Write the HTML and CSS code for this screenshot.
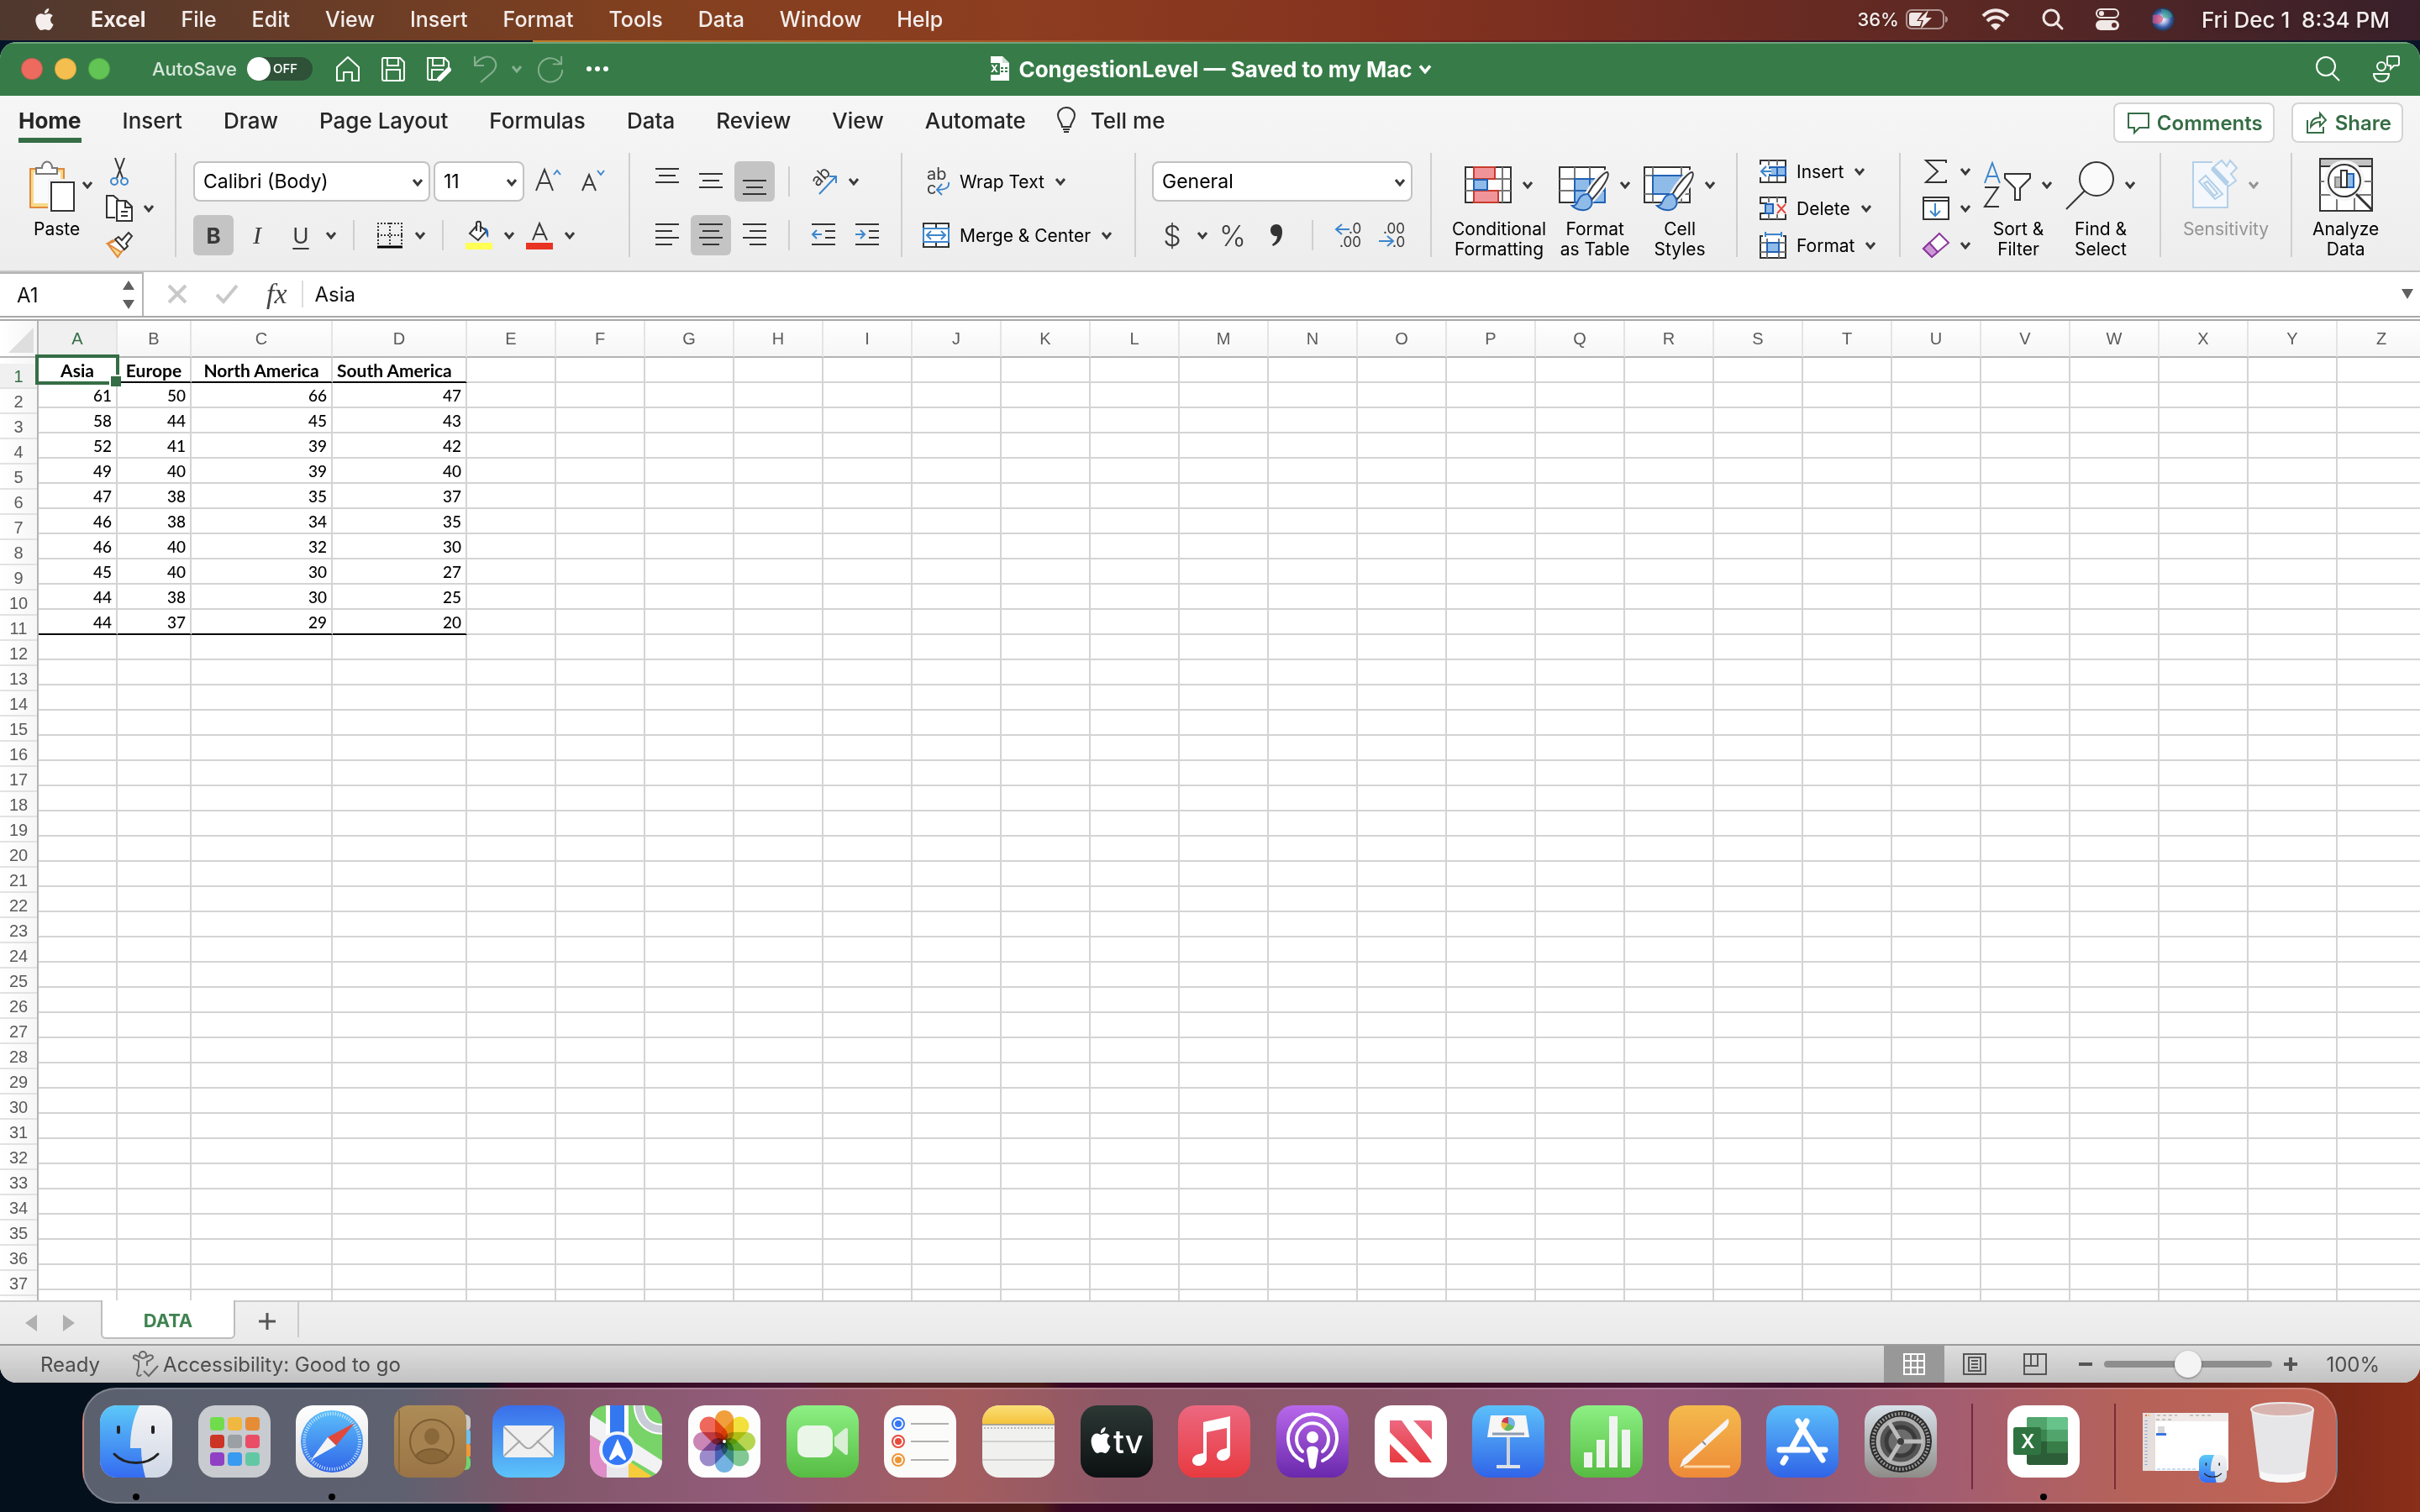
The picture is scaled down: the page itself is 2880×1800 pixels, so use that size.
FILE: index.html
```html
<!DOCTYPE html>
<html lang="en">
<head>
    <meta charset="UTF-8">
    <meta name="viewport" content="width=device-width, initial-scale=1.0">
    <title>CongestionLevel</title>
    <link rel="stylesheet" href="styles.css">
</head>
<body>
    <!-- shared shapes -->
    <svg class="defs" width="0" height="0" aria-hidden="true">
        <defs>
            <symbol id="chev" viewBox="0 0 14 10"><path d="M2 2l5 6 5-6" fill="none" stroke="currentColor" stroke-width="3"/></symbol>
            <symbol id="apple" viewBox="0 0 24 24"><path d="M12.152 6.896c-.948 0-2.415-1.078-3.96-1.04-2.04.027-3.91 1.183-4.961 3.014-2.117 3.675-.546 9.103 1.519 12.09 1.013 1.454 2.208 3.09 3.792 3.039 1.52-.065 2.09-.987 3.935-.987 1.831 0 2.35.987 3.96.948 1.637-.026 2.676-1.48 3.676-2.948 1.156-1.688 1.636-3.325 1.662-3.415-.039-.013-3.182-1.221-3.22-4.857-.026-3.04 2.48-4.494 2.597-4.559-1.429-2.09-3.623-2.324-4.39-2.376-2-.156-3.675 1.09-4.61 1.09zM15.53 3.83c.843-1.012 1.4-2.427 1.245-3.83-1.207.052-2.662.805-3.532 1.818-.78.896-1.454 2.338-1.273 3.714 1.338.104 2.715-.688 3.559-1.701" fill="currentColor"/></symbol>
            <symbol id="brush" viewBox="0 0 60 64">
                <path d="M58 17c-3-1-16 12-24 27l6 5C50 38 62 22 58 17z" fill="#fff" stroke="#f2f2f2" stroke-width="7"/>
                <path d="M58 17c-3-1-16 12-24 27l6 5C50 38 62 22 58 17z" fill="#fff" stroke="#3a3a3a" stroke-width="2"/>
                <path d="M35 43c-8-1-11 5-13 10-1 3-4 4-6 4 5 5 17 8 22 1 3-4 2-9-3-15z" fill="#8fbbe8" stroke="#2262b4" stroke-width="2"/>
            </symbol>
            <symbol id="finder" viewBox="0 0 86 86">
                <rect width="86" height="86" rx="20" fill="url(#gFinderR)"/>
                <path d="M47 0H20A20 20 0 0 0 0 20v46a20 20 0 0 0 20 20h34c-3-11-5-23-5-35H36C36 33 39 16 47 0z" fill="url(#gFinderL)"/>
                <path d="M22 26v6M63 26v6" stroke="#222" stroke-width="4" stroke-linecap="round"/>
                <path d="M17 58c13 14 39 14 52 0" fill="none" stroke="#222" stroke-width="3" stroke-linecap="round"/>
            </symbol>
            <linearGradient id="gFinderL" x2="0" y2="1"><stop offset="0" stop-color="#5cc8f8"/><stop offset="1" stop-color="#356bf0"/></linearGradient>
            <linearGradient id="gFinderR" x2="0" y2="1"><stop offset="0" stop-color="#f4f4f6"/><stop offset="1" stop-color="#d0d8e6"/></linearGradient>
            <linearGradient id="gBlue" x2="0" y2="1"><stop offset="0" stop-color="#5cc0fa"/><stop offset="1" stop-color="#3064e8"/></linearGradient>
            <linearGradient id="gMail" x2="0" y2="1"><stop offset="0" stop-color="#3a6eea"/><stop offset="1" stop-color="#5cc4fa"/></linearGradient>
            <linearGradient id="gGreen" x2="0" y2="1"><stop offset="0" stop-color="#8cf084"/><stop offset="1" stop-color="#56bc42"/></linearGradient>
            <linearGradient id="gWhite" x2="0" y2="1"><stop offset="0" stop-color="#fff"/><stop offset="1" stop-color="#dcdcdc"/></linearGradient>
            <linearGradient id="gTan" x2="0" y2="1"><stop offset="0" stop-color="#ae8c56"/><stop offset="1" stop-color="#9a7446"/></linearGradient>
            <linearGradient id="gYellow" x2="0" y2="1"><stop offset="0" stop-color="#fae078"/><stop offset="1" stop-color="#f5c23c"/></linearGradient>
            <linearGradient id="gDark" x2="0" y2="1"><stop offset="0" stop-color="#2c3834"/><stop offset="1" stop-color="#0c1012"/></linearGradient>
            <linearGradient id="gRed" x2="0" y2="1"><stop offset="0" stop-color="#ec6880"/><stop offset="1" stop-color="#e83a40"/></linearGradient>
            <linearGradient id="gPurple" x2="0" y2="1"><stop offset="0" stop-color="#b868ea"/><stop offset="1" stop-color="#6a28ac"/></linearGradient>
            <linearGradient id="gOrange" x2="0" y2="1"><stop offset="0" stop-color="#f4ba4c"/><stop offset="1" stop-color="#ee8a38"/></linearGradient>
            <linearGradient id="gGear" x2="0" y2="1"><stop offset="0" stop-color="#d8e2ea"/><stop offset="1" stop-color="#8e8c88"/></linearGradient>
            <radialGradient id="gSiri"><stop offset="0" stop-color="#fff"/><stop offset=".35" stop-color="#a8b8e0"/><stop offset=".7" stop-color="#3a5aa8"/><stop offset="1" stop-color="#24344a"/></radialGradient>
            <clipPath id="tile"><rect width="86" height="86" rx="20"/></clipPath>
        </defs>
    </svg>

    <header class="menubar">
        <nav class="menus">
            <button class="apple" aria-label="Apple"><svg width="26" height="30"><use href="#apple"/></svg></button>
            <button class="app-name">Excel</button>
            <button>File</button>
            <button>Edit</button>
            <button>View</button>
            <button>Insert</button>
            <button>Format</button>
            <button>Tools</button>
            <button>Data</button>
            <button>Window</button>
            <button>Help</button>
        </nav>
        <div class="tray">
            <span class="battery">36%
                <svg width="52" height="24" viewBox="0 0 52 24"><rect x="1" y="1" width="44" height="22" rx="6" fill="none" stroke="#fff" stroke-opacity=".5" stroke-width="2"/><path d="M47 8c4 1 4 7 0 8z" fill="#fff" opacity=".5"/><path d="M7 4h13l-7 10h6l-2 6H7a3 3 0 0 1-3-3V7a3 3 0 0 1 3-3z" fill="#f0e8e6"/><path d="M27 1L15 13h6l-3 10 13-13h-7z" fill="#f0e8e6"/></svg>
            </span>
            <svg width="34" height="26" viewBox="0 0 34 26" fill="none" stroke="#f0e8e6" stroke-width="4"><path d="M2 9c9-9 21-9 30 0M7 15c6-6 14-6 20 0"/><path d="M11 20c4-3 8-3 12 0l-6 6z" fill="#f0e8e6" stroke="none"/></svg>
            <svg width="26" height="26" viewBox="0 0 26 26" fill="none" stroke="#f0e8e6" stroke-width="3"><circle cx="11" cy="11" r="9"/><path d="M17 17l7 7" stroke-linecap="round"/></svg>
            <svg width="28" height="28" viewBox="0 0 28 28"><rect x="1" y="2" width="26" height="10" rx="5" fill="none" stroke="#f0e8e6" stroke-width="2"/><circle cx="7" cy="7" r="3" fill="#f0e8e6"/><rect y="15" width="28" height="12" rx="6" fill="#f0e8e6"/><circle cx="22" cy="21" r="3" fill="#5a2a28"/></svg>
            <svg width="28" height="28" viewBox="0 0 28 28"><circle cx="14" cy="14" r="14" fill="url(#gSiri)"/><path d="M2 9c8-2 14 2 12 6s-8 6-12 3z" fill="#e0507c" opacity=".7"/><path d="M12 2c8 0 13 4 13 9-4 2-9 2-11 1z" fill="#3cae90" opacity=".6"/></svg>
            <time>Fri Dec 1&nbsp; 8:34 PM</time>
        </div>
    </header>

    <main class="window">
        <div class="titlebar">
            <div class="title-left">
                <div class="lights">
                    <button class="light close" aria-label="Close"></button>
                    <button class="light minimize" aria-label="Minimize"></button>
                    <button class="light maximize" aria-label="Zoom"></button>
                </div>
                <label class="autosave">AutoSave
                    <span class="switch"><input type="checkbox" role="switch"><span>OFF</span></span>
                </label>
                <div class="quick">
                    <button aria-label="Home"><svg width="28" height="32" viewBox="0 0 28 32" fill="none" stroke="#fff" stroke-width="2"><path d="M1 14L14 2l13 12v16h-8V20H9v10H1z" stroke-linejoin="round"/></svg></button>
                    <button aria-label="Save"><svg width="28" height="30" viewBox="0 0 28 30" fill="none" stroke="#fff" stroke-width="2"><path d="M2 2h20l5 5v20a2 2 0 0 1-2 2H3a2 2 0 0 1-2-2V3zM7 2v9h13V2M6 29V16h16v13"/></svg></button>
                    <button aria-label="Save as"><svg width="30" height="30" viewBox="0 0 30 30" fill="none" stroke="#fff" stroke-width="2"><path d="M12 28H3a2 2 0 0 1-2-2V2h20l5 5v6M7 2v9h13V2M6 28V16h14"/><path d="M15 27l11-11" stroke-width="6" stroke-linecap="round"/></svg></button>
                    <button class="dim" aria-label="Undo"><svg width="28" height="34" viewBox="0 0 28 34" fill="none" stroke="#fff" stroke-width="2"><path d="M1 2v11h11M1 12C8 3 17 0 23 5c5 5 4 11-1 16L8 33"/></svg></button>
                    <button class="dim small" aria-label="Undo list"><svg width="14" height="10"><use href="#chev"/></svg></button>
                    <button class="dim" aria-label="Redo"><svg width="32" height="34" viewBox="0 0 34 34" fill="none" stroke="#fff" stroke-width="2"><path d="M31 1v10H20M30 11A15 15 0 1 0 32 18"/></svg></button>
                    <button aria-label="More"><svg width="28" height="6" viewBox="0 0 28 6" fill="#fff"><circle cx="4" cy="3" r="3"/><circle cx="14" cy="3" r="3"/><circle cx="24" cy="3" r="3"/></svg></button>
                </div>
            </div>
            <h1 class="doc-title">
                <svg width="26" height="30" viewBox="0 0 26 30"><path d="M3 0h14l8 8v21H3z" fill="#fff"/><path d="M17 0v8h8z" fill="#cfe0d4"/><path d="M15 13h3v2h-3zM20 13h3v2h-3zM15 17h3v2h-3zM20 17h3v2h-3z" fill="#377c48"/><rect y="8" width="14" height="14" rx="1" fill="#377c48"/><text x="3" y="19" font-size="12" fill="#fff">X</text></svg>
                CongestionLevel — Saved to my Mac
                <svg class="title-chev" width="18" height="12"><use href="#chev"/></svg>
            </h1>
            <div class="title-right">
                <button aria-label="Search"><svg width="30" height="30" viewBox="0 0 30 30" fill="none" stroke="#fff" stroke-width="2"><circle cx="12" cy="12" r="11"/><path d="M19 20l9 9"/></svg></button>
                <button aria-label="Collaborate"><svg width="32" height="32" viewBox="0 0 32 32" fill="none" stroke="#fff" stroke-width="2"><circle cx="10" cy="13" r="5"/><path d="M1 22h18c0 12-18 12-18 0zM19 1h10a2 2 0 0 1 2 2v7a2 2 0 0 1-2 2h-4l-4 4v-4h-2a2 2 0 0 1-2-2V3a2 2 0 0 1 2-2z"/></svg></button>
            </div>
        </div>

        <section class="ribbon">
            <div class="tabs">
                <button class="tab active">Home</button>
                <button class="tab">Insert</button>
                <button class="tab">Draw</button>
                <button class="tab">Page Layout</button>
                <button class="tab">Formulas</button>
                <button class="tab">Data</button>
                <button class="tab">Review</button>
                <button class="tab">View</button>
                <button class="tab">Automate</button>
                <button class="tab tell"><svg width="22" height="32" viewBox="0 0 22 32" fill="none" stroke="#333" stroke-width="2"><path d="M6 24c0-6-5-7-5-14a10 9 0 0 1 20 0c0 7-5 8-5 14zM6 24h10M7 27h8M8 30h6"/></svg>Tell me</button>
                <div class="tab-actions">
                    <button class="pill"><svg width="26" height="26" viewBox="0 0 26 26" fill="none" stroke="#356d45" stroke-width="2"><path d="M1 2h24v17H14l-6 6v-6H1z"/></svg>Comments</button>
                    <button class="pill"><svg width="26" height="26" viewBox="0 0 26 26" fill="none" stroke="#356d45" stroke-width="2"><path d="M2 10v15h19v-7M6 18c0-7 4-11 11-11V2l7 8-7 7v-5c-5 0-8 2-11 6z"/></svg>Share</button>
                </div>
            </div>

            <div class="groups">
                <div class="group group-clipboard">
                    <button class="big">
                        <span class="big-icon"><svg width="56" height="64" viewBox="0 0 56 64"><rect x="2" y="13" width="40" height="46" fill="#f6d98a" stroke="#e08a3c" stroke-width="2"/><rect x="6" y="17" width="32" height="37" fill="#fafafa"/><path d="M9 12h7c0-10 12-10 12 0h6v7H9z" fill="#fff" stroke="#777" stroke-width="2"/><rect x="23" y="25" width="33" height="39" fill="#f2f2f2"/><rect x="27" y="29" width="27" height="34" fill="#fff" stroke="#333" stroke-width="2"/></svg><svg class="chev" width="14" height="10"><use href="#chev"/></svg></span>
                        <span>Paste</span>
                    </button>
                    <div class="stack">
                        <button class="mini" aria-label="Cut"><svg width="32" height="32" viewBox="0 0 32 32" fill="none" stroke="#333" stroke-width="2"><path d="M11 0l9 24M22 0l-9 24"/><circle cx="10" cy="28" r="4" stroke="#3c86cc"/><circle cx="22" cy="28" r="4" stroke="#3c86cc"/></svg></button>
                        <button class="mini" aria-label="Copy"><svg width="32" height="32" viewBox="0 0 32 32" fill="#fff" stroke="#333" stroke-width="2"><path d="M11 27H1V1h8l6 5"/><path d="M13 7h11l7 7v17H13zM23 7v8h8M18 20h8M18 25h8"/></svg><svg class="chev" width="14" height="10"><use href="#chev"/></svg></button>
                        <button class="mini" aria-label="Format painter"><svg width="32" height="32" viewBox="0 0 32 32"><path d="M8 10L2 14l12 16 5-7z" fill="#f6d98a" stroke="#e08a3c" stroke-width="2"/><path d="M2 14c6-1 8-2 10-5l11 11-5 4z" fill="#fff" stroke="#e08a3c" stroke-width="2"/><path d="M11 9l4-3 4 4L27 1l4 4-7 9 2 3-4 4z" fill="#fff" stroke="#333" stroke-width="2"/></svg></button>
                    </div>
                </div>

                <div class="group rows group-font">
                    <div class="row">
                        <span class="pick pick-font"><select aria-label="Font"><option>Calibri (Body)</option></select><svg class="chev" width="14" height="10"><use href="#chev"/></svg></span>
                        <span class="pick pick-size"><select aria-label="Font size"><option>11</option></select><svg class="chev" width="14" height="10"><use href="#chev"/></svg></span>
                        <button class="tool" aria-label="Increase font size"><svg width="32" height="32" viewBox="0 0 32 32" fill="none" stroke-width="2"><path d="M2 27L12 2l10 25M6 18h12" stroke="#3a3a3a"/><path d="M23 8l4-5 4 5" stroke="#3c86cc"/></svg></button>
                        <button class="tool" aria-label="Decrease font size"><svg width="32" height="32" viewBox="0 0 32 32" fill="none" stroke-width="2"><path d="M5 27L13 8l8 19M8 20h10" stroke="#3a3a3a"/><path d="M23 3l4 5 4-5" stroke="#3c86cc"/></svg></button>
                    </div>
                    <div class="row">
                        <button class="tool on bold">B</button>
                        <button class="tool italic">I</button>
                        <button class="tool underline">U</button>
                        <button class="drop" aria-label="Underline styles"><svg class="chev" width="14" height="10"><use href="#chev"/></svg></button>
                        <i class="divider"></i>
                        <button class="tool" aria-label="Borders"><svg width="32" height="32" viewBox="0 0 32 32" stroke="#333" stroke-width="2"><path d="M1 2h30M1 16h30M2 1v26M16 1v26M30 1v26" stroke-dasharray="2 2"/><path d="M1 30h30" stroke="#000" stroke-width="3"/></svg></button>
                        <button class="drop" aria-label="Border styles"><svg class="chev" width="14" height="10"><use href="#chev"/></svg></button>
                        <i class="divider"></i>
                        <button class="tool" aria-label="Fill color"><svg width="32" height="34" viewBox="0 0 32 34"><path d="M14 5L5 15l10 8 10-11-8-6M13 12V3c0-3 5-3 5 0v10" fill="#fff" stroke="#333" stroke-width="2"/><path d="M22 8c5 0 6 5 5 12-3-2-2-7-5-12z" fill="#2468b8"/><rect y="26" width="32" height="8" fill="#ffff54"/></svg></button>
                        <button class="drop" aria-label="Fill colors"><svg class="chev" width="14" height="10"><use href="#chev"/></svg></button>
                        <button class="tool" aria-label="Font color"><svg width="32" height="34" viewBox="0 0 32 34"><path d="M8 23L16 3l9 20M11 16h11" fill="none" stroke="#3a3a3a" stroke-width="2"/><rect y="26" width="32" height="8" fill="#e93323"/></svg></button>
                        <button class="drop" aria-label="Font colors"><svg class="chev" width="14" height="10"><use href="#chev"/></svg></button>
                    </div>
                </div>

                <div class="group rows group-align">
                    <div class="row">
                        <button class="tool" aria-label="Align top"><svg width="30" height="32" viewBox="0 0 30 32" stroke="#333" stroke-width="2"><path d="M1 1h28M5 9h20M1 17h28"/></svg></button>
                        <button class="tool" aria-label="Align middle"><svg width="30" height="32" viewBox="0 0 30 32" stroke="#333" stroke-width="2"><path d="M1 7h28M5 15h20M1 23h28"/></svg></button>
                        <button class="tool on" aria-label="Align bottom"><svg width="30" height="32" viewBox="0 0 30 32" stroke="#333" stroke-width="2"><path d="M1 15h28M5 23h20M1 31h28"/></svg></button>
                        <i class="divider"></i>
                        <button class="tool" aria-label="Orientation"><svg width="34" height="32" viewBox="0 0 34 32"><text x="0" y="0" font-size="20" fill="#3a3a3a" transform="translate(10 23) rotate(-45)">ab</text><path d="M12 31L32 10M24 10h8v8" fill="none" stroke="#3c86cc" stroke-width="2"/></svg></button>
                        <button class="drop" aria-label="Orientations"><svg class="chev" width="14" height="10"><use href="#chev"/></svg></button>
                    </div>
                    <div class="row">
                        <button class="tool" aria-label="Align left"><svg width="30" height="30" viewBox="0 0 30 30" stroke="#333" stroke-width="2"><path d="M1 2h28M1 10h20M1 18h28M1 26h20"/></svg></button>
                        <button class="tool on" aria-label="Center"><svg width="30" height="30" viewBox="0 0 30 30" stroke="#333" stroke-width="2"><path d="M1 2h28M5 10h20M1 18h28M5 26h20"/></svg></button>
                        <button class="tool" aria-label="Align right"><svg width="30" height="30" viewBox="0 0 30 30" stroke="#333" stroke-width="2"><path d="M1 2h28M9 10h20M1 18h28M9 26h20"/></svg></button>
                        <i class="divider"></i>
                        <button class="tool" aria-label="Decrease indent"><svg width="30" height="30" viewBox="0 0 30 30" fill="none" stroke="#333" stroke-width="2"><path d="M1 2h28M17 10h12M17 18h12M1 26h28"/><path d="M13 14H2M7 9l-5 5 5 5" stroke="#3c86cc"/></svg></button>
                        <button class="tool" aria-label="Increase indent"><svg width="30" height="30" viewBox="0 0 30 30" fill="none" stroke="#333" stroke-width="2"><path d="M1 2h28M17 10h12M17 18h12M1 26h28"/><path d="M1 14h11M7 9l5 5-5 5" stroke="#3c86cc"/></svg></button>
                    </div>
                </div>

                <div class="group rows group-wrap">
                    <div class="row">
                        <button class="wide"><svg width="32" height="32" viewBox="0 0 32 32"><text x="5" y="14" font-size="20" fill="#3a3a3a">ab</text><text x="5" y="31" font-size="20" fill="#3a3a3a">c</text><path d="M31 17c1 6-3 9-14 9M23 19l-6 7 6 6" fill="none" stroke="#3c86cc" stroke-width="2"/></svg>Wrap Text<svg class="chev" width="14" height="10"><use href="#chev"/></svg></button>
                    </div>
                    <div class="row">
                        <button class="wide"><svg width="32" height="32" viewBox="0 0 32 32" fill="#fff" stroke="#333" stroke-width="2"><rect x="1" y="2" width="30" height="28"/><path d="M16 2v6M16 24v6"/><rect x="1" y="8" width="30" height="16" stroke="#3c86cc"/><path d="M5 16h22M10 11l-5 5 5 5M22 11l5 5-5 5" fill="none" stroke="#3c86cc"/></svg>Merge &amp; Center<svg class="chev" width="14" height="10"><use href="#chev"/></svg></button>
                    </div>
                </div>

                <div class="group rows group-number">
                    <div class="row">
                        <span class="pick pick-format"><select aria-label="Number format"><option>General</option></select><svg class="chev" width="14" height="10"><use href="#chev"/></svg></span>
                    </div>
                    <div class="row">
                        <button class="tool symbol">$</button>
                        <button class="drop" aria-label="Currencies"><svg class="chev" width="14" height="10"><use href="#chev"/></svg></button>
                        <button class="tool symbol">%</button>
                        <button class="tool" aria-label="Comma style"><svg width="16" height="28" viewBox="0 0 16 28"><path d="M8 1c4 0 7 3 7 9 0 8-4 14-11 17l-1-2c4-3 6-6 6-10C4 16 1 12 1 8c0-4 3-7 7-7z" fill="#333"/></svg></button>
                        <i class="divider"></i>
                        <button class="tool" aria-label="Increase decimal"><svg width="32" height="32" viewBox="0 0 32 32"><g font-size="17" fill="#3a3a3a"><text x="16" y="14">.0</text><text x="5" y="30">.00</text></g><path d="M17 9H1M8 3L1 9l7 6" fill="none" stroke="#3c86cc" stroke-width="2"/></svg></button>
                        <button class="tool" aria-label="Decrease decimal"><svg width="32" height="32" viewBox="0 0 32 32"><g font-size="17" fill="#3a3a3a"><text x="5" y="14">.00</text><text x="16" y="30">.0</text></g><path d="M0 23h17M10 17l7 6-7 6" fill="none" stroke="#3c86cc" stroke-width="2"/></svg></button>
                    </div>
                </div>

                <div class="group group-styles">
                    <button class="big">
                        <span class="big-icon"><svg width="56" height="64" viewBox="0 0 56 64" stroke-width="2"><rect x="1" y="11" width="54" height="42" fill="#fff" stroke="#333"/><path d="M1 25h54M1 39h54M11 11v42M45 11v42" stroke="#777"/><path d="M11 11h25v14H11zM11 39h29v14H11z" fill="#f1949a" stroke="#c93a2c"/><path d="M11 26h16v12H11z" fill="#8fbbe8" stroke="#2262b4"/></svg><svg class="chev" width="14" height="10"><use href="#chev"/></svg></span>
                        <span>Conditional<br>Formatting</span>
                    </button>
                    <button class="big">
                        <span class="big-icon"><svg width="60" height="64" viewBox="0 0 60 64" stroke-width="2"><rect x="1" y="11" width="54" height="42" fill="#fff" stroke="#333"/><path d="M1 25h54M1 39h18M19 11v14M37 11v14" stroke="#777"/><path d="M19 25h36v28H19zM19 39h36M37 25v28" fill="#8fbbe8" stroke="#2262b4"/><use href="#brush" width="60" height="64"/></svg><svg class="chev" width="14" height="10"><use href="#chev"/></svg></span>
                        <span>Format<br>as Table</span>
                    </button>
                    <button class="big">
                        <span class="big-icon"><svg width="60" height="64" viewBox="0 0 60 64" stroke-width="2"><rect x="1" y="11" width="54" height="42" fill="#fff" stroke="#333"/><path d="M1 21h54M1 43h54M11 11v42M45 11v42" stroke="#777"/><path d="M11 21h34v22H11z" fill="#8fbbe8" stroke="#2262b4"/><use href="#brush" width="60" height="64"/></svg><svg class="chev" width="14" height="10"><use href="#chev"/></svg></span>
                        <span>Cell<br>Styles</span>
                    </button>
                </div>

                <div class="group group-cells">
                    <div class="stack">
                        <button class="mini"><svg width="32" height="32" viewBox="0 0 32 32" fill="#fff" stroke="#333" stroke-width="2"><path d="M1 8V3h30v26H1v-6"/><path d="M11 3v6M21 3v6M11 22v6M21 22v6" stroke="#777"/><path d="M12 11h19v10H12zM21 11v10" fill="#8fbbe8" stroke="#2262b4"/><path d="M14 16H2M8 10l-6 6 6 6" fill="none" stroke="#f6f6f6" stroke-width="6"/><path d="M14 16H2M8 10l-6 6 6 6" fill="none" stroke="#3c86cc"/></svg>Insert<svg class="chev" width="14" height="10"><use href="#chev"/></svg></button>
                        <button class="mini"><svg width="32" height="32" viewBox="0 0 32 32" fill="#fff" stroke="#333" stroke-width="2"><path d="M31 10V3H1v7h8M9 22H1v7h30v-6"/><path d="M11 3v6M21 3v6M11 23v6M21 23v6" stroke="#777"/><path d="M7 11h9v11H7z" fill="#8fbbe8" stroke="#2262b4"/><path d="M21 11l10 11M31 11L21 22" stroke="#f6f6f6" stroke-width="6"/><path d="M21 11l10 11M31 11L21 22" stroke="#e24c40"/></svg>Delete<svg class="chev" width="14" height="10"><use href="#chev"/></svg></button>
                        <button class="mini"><svg width="32" height="32" viewBox="0 0 32 32" fill="#fff" stroke="#333" stroke-width="2"><path d="M4 5H1v26h30V5h-3"/><path d="M1 13h30M1 24h30M9 8v23M23 8v23" stroke="#777"/><path d="M9 13h14v11H9z" fill="#8fbbe8" stroke="#2262b4"/><path d="M7 0v6M26 0v6M7 3h19" stroke="#3c86cc"/></svg>Format<svg class="chev" width="14" height="10"><use href="#chev"/></svg></button>
                    </div>
                </div>

                <div class="group group-editing">
                    <div class="stack">
                        <button class="mini" aria-label="AutoSum"><svg width="32" height="32" viewBox="0 0 32 32" fill="none" stroke="#333" stroke-width="2"><path d="M28 6V3H4l14 13L4 29h24v-3"/></svg><svg class="chev" width="14" height="10"><use href="#chev"/></svg></button>
                        <button class="mini" aria-label="Fill"><svg width="32" height="32" viewBox="0 0 32 32" fill="#fff" stroke="#333" stroke-width="2"><path d="M1 3h30v26H1zM1 7h30"/><path d="M15 10v15M9 19l6 6 6-6" fill="none" stroke="#3c86cc"/></svg><svg class="chev" width="14" height="10"><use href="#chev"/></svg></button>
                        <button class="mini" aria-label="Clear"><svg width="32" height="32" viewBox="0 0 32 32" stroke="#8a389c" stroke-width="2"><path d="M20 2l11 11-20 17L1 20z" fill="#fff"/><path d="M8 13l10 11-7 6L1 20z" fill="#cc96d4"/></svg><svg class="chev" width="14" height="10"><use href="#chev"/></svg></button>
                    </div>
                    <button class="big">
                        <span class="big-icon"><svg width="56" height="64" viewBox="0 0 56 64" fill="none" stroke-width="2"><path d="M1 30l9-24 9 24M4 22h12" stroke="#3c86cc"/><path d="M1 35h16L1 58h17" stroke="#333"/><path d="M25 19h30v5L43 36v14h-6V36L25 24z" fill="#fff" stroke="#333"/></svg><svg class="chev" width="14" height="10"><use href="#chev"/></svg></span>
                        <span>Sort &amp;<br>Filter</span>
                    </button>
                    <button class="big">
                        <span class="big-icon"><svg width="58" height="64" viewBox="0 0 58 64" fill="#fafafa" stroke="#333" stroke-width="2"><path d="M1 61l22-22"/><circle cx="37" cy="25" r="20"/></svg><svg class="chev" width="14" height="10"><use href="#chev"/></svg></span>
                        <span>Find &amp;<br>Select</span>
                    </button>
                </div>

                <div class="group group-sensitivity">
                    <button class="big" disabled>
                        <span class="big-icon"><svg width="54" height="64" viewBox="0 0 54 64" fill="#f4f8fc" stroke="#b3cfe8" stroke-width="2"><path d="M24 5H1v54h41V34"/><path d="M16 21l20 22-9 6L8 28z"/><path d="M18 28l12 14-4 3-12-15z"/><path d="M24 12l11-9 6 7 4-7 8 9-7 7 6 8-9 7z"/><path d="M24 12l18 19" stroke-width="6"/></svg><svg class="chev" width="14" height="10"><use href="#chev"/></svg></span>
                        <span>Sensitivity</span>
                    </button>
                </div>

                <div class="group group-analyze">
                    <button class="big">
                        <span class="big-icon"><svg width="64" height="64" viewBox="0 0 64 64" fill="#fff" stroke="#333" stroke-width="2"><rect x="1" y="1" width="62" height="62"/><path d="M1 1h62v9H1z" fill="#c4c4c4"/><path d="M1 28h62M1 44h62M21 44v18M42 44v18" stroke="#777"/><circle cx="30" cy="27" r="23" fill="#f4f4f4" stroke="#f4f4f4"/><circle cx="30" cy="27" r="19"/><path d="M44 43l19 19" stroke-width="3"/><path d="M19 23h7v12h-7z" fill="#bbb" stroke="#888"/><path d="M33 19h8v16h-8z" fill="#8fbbe8" stroke="#2262b4"/><path d="M26 15h7v20h-7z"/></svg></span>
                        <span>Analyze<br>Data</span>
                    </button>
                </div>
            </div>
        </section>

        <div class="formula-bar">
            <div class="name-box">
                <input type="text" value="A1" aria-label="Name box">
                <svg width="14" height="34" viewBox="0 0 14 34" fill="#606060"><path d="M7 0l7 11H0zM7 34l7-11H0z"/></svg>
            </div>
            <button aria-label="Cancel"><svg width="24" height="24" viewBox="0 0 24 24" stroke="#c9c9c9" stroke-width="4"><path d="M2 2l20 20M22 2L2 22"/></svg></button>
            <button aria-label="Enter"><svg width="28" height="24" viewBox="0 0 28 24" fill="none" stroke="#c9c9c9" stroke-width="4"><path d="M2 13l8 8L26 2"/></svg></button>
            <button class="fx" aria-label="Insert function">fx</button>
            <input class="formula" type="text" value="Asia" aria-label="Formula">
            <button class="expand" aria-label="Expand"><svg width="14" height="12" viewBox="0 0 14 12" fill="#606060"><path d="M0 0h14L7 12z"/></svg></button>
        </div>

        <div class="sheet">
            <div class="row-heads">
                <div class="corner"><svg width="30" height="30" viewBox="0 0 30 30"><path d="M30 0v30H0z" fill="#dedede"/></svg></div>
                <ol id="rows"></ol>
            </div>
            <table class="grid">
                <thead><tr id="cols"></tr></thead>
                <tbody id="cells"></tbody>
            </table>
        </div>

        <div class="sheet-tabs">
            <button class="nav" aria-label="Previous sheet"><svg width="14" height="20" viewBox="0 0 14 20"><path d="M14 0v20L0 10z" fill="#b0b0b0"/></svg></button>
            <button class="nav" aria-label="Next sheet"><svg width="14" height="20" viewBox="0 0 14 20"><path d="M0 0v20l14-10z" fill="#b0b0b0"/></svg></button>
            <button class="sheet-tab">DATA</button>
            <button class="add" aria-label="Add sheet"><svg width="20" height="20" viewBox="0 0 20 20" stroke="#555" stroke-width="3"><path d="M10 0v20M0 10h20"/></svg></button>
        </div>

        <footer class="status">
            <span>Ready</span>
            <button class="access"><svg width="32" height="32" viewBox="0 0 32 32" fill="none" stroke="#666" stroke-width="2"><circle cx="13" cy="5" r="4"/><path d="M9 8C5 4 1 5 2 9l6 3v8L6 28c1 3 4 3 5 0M17 8c4-4 8-3 8 0 0 2-3 3-7 5v5M14 24l6 6L31 18"/></svg>Accessibility: Good to go</button>
            <div class="views">
                <button class="view on" aria-label="Normal"><svg width="26" height="26" viewBox="0 0 26 26" fill="none" stroke="#fff" stroke-width="2"><path d="M1 1h24v24H1zM9 1v24M17 1v24M1 9h24M1 17h24"/></svg></button>
                <button class="view" aria-label="Page layout"><svg width="28" height="26" viewBox="0 0 28 26" fill="none" stroke="#555" stroke-width="2"><path d="M1 1h26v24H1zM7 5h14v16H7zM10 9h8M10 13h8M10 17h8"/></svg></button>
                <button class="view" aria-label="Page break"><svg width="28" height="26" viewBox="0 0 28 26" fill="none" stroke="#555" stroke-width="2"><path d="M1 1h26v24H1zM1 15h16V1M9 1v14"/></svg></button>
            </div>
            <button class="step" aria-label="Zoom out"><svg width="16" height="16" viewBox="0 0 16 16"><path d="M0 8h16" stroke="#555" stroke-width="4"/></svg></button>
            <input class="zoom" type="range" min="0" max="100" value="50" aria-label="Zoom">
            <button class="step" aria-label="Zoom in"><svg width="16" height="16" viewBox="0 0 16 16"><path d="M0 8h16M8 0v16" stroke="#555" stroke-width="4"/></svg></button>
            <span class="percent">100%</span>
        </footer>
    </main>

    <nav class="dock">
        <div class="apps">
            <button class="app running" aria-label="Finder"><svg viewBox="0 0 86 86"><use href="#finder"/></svg></button>
            <button class="app" aria-label="Launchpad"><svg viewBox="0 0 86 86"><rect width="86" height="86" rx="20" fill="#c8cbd0"/><g><rect x="14" y="14" width="17" height="16" rx="4" fill="#70dc4c"/><rect x="35" y="14" width="17" height="16" rx="4" fill="#f0b840"/><rect x="56" y="14" width="17" height="16" rx="4" fill="#e68c34"/><rect x="14" y="35" width="17" height="16" rx="4" fill="#cc3426"/><rect x="35" y="35" width="17" height="16" rx="4" fill="#9aa0a4"/><rect x="56" y="35" width="17" height="16" rx="4" fill="#ea4e66"/><rect x="14" y="56" width="17" height="16" rx="4" fill="#9040c4"/><rect x="35" y="56" width="17" height="16" rx="4" fill="#389af0"/><rect x="56" y="56" width="17" height="16" rx="4" fill="#62c8a4"/></g></svg></button>
            <button class="app running" aria-label="Safari"><svg viewBox="0 0 86 86"><rect width="86" height="86" rx="20" fill="url(#gWhite)"/><circle cx="43" cy="43" r="37" fill="url(#gBlue)"/><circle cx="43" cy="43" r="33" fill="none" stroke="#d6ecfc" stroke-width="4" stroke-dasharray="1 2"/><path d="M70 21L38 38l10 10z" fill="#e0483c"/><path d="M18 65l20-27 10 10z" fill="#f4f4f4"/></svg></button>
            <button class="app" aria-label="Contacts"><svg viewBox="0 0 92 86"><rect x="70" y="11" width="21" height="20" rx="6" fill="#c8c8c8"/><rect x="70" y="29" width="21" height="18" rx="3" fill="#6cc0ea"/><rect x="70" y="46" width="21" height="16" rx="3" fill="#f09838"/><rect x="70" y="60" width="21" height="17" rx="6" fill="#70d470"/><rect width="86" height="86" rx="18" fill="url(#gTan)"/><path d="M6 6v74" stroke="#8a6a3c" stroke-width="2"/><g fill="none" stroke="#7c5c30" stroke-width="2"><circle cx="45" cy="43" r="26" fill="#a68250"/><path d="M26 61c5-12 33-12 38 0-10 11-28 11-38 0z" fill="#8a683a"/></g><ellipse cx="45" cy="37" rx="9" ry="10" fill="#8a683a"/></svg></button>
            <button class="app" aria-label="Mail"><svg viewBox="0 0 86 86"><rect width="86" height="86" rx="20" fill="url(#gMail)"/><rect x="13" y="24" width="60" height="38" rx="4" fill="#f0f0f0"/><path d="M14 60l19-18M72 60L53 42M14 26l24 23c3 3 7 3 10 0l24-23" fill="none" stroke="#a8a8a8" stroke-width="2"/></svg></button>
            <button class="app" aria-label="Maps"><svg viewBox="0 0 86 86"><g clip-path="url(#tile)"><rect width="86" height="86" fill="#78d468"/><path d="M0 35l20 13v38H0z" fill="#e08cc8"/><path d="M46 66l30 20H46z" fill="#f5cc3c"/><path d="M0 10l86 56v20L0 35z" fill="#f2f2f4"/><path d="M20 44h26v42H20z" fill="#e8e8ec"/><path d="M19 0h27v44H19z" fill="#fff"/><path d="M24 0h17v50H24z" fill="#3478f0"/><path d="M58-4c0 24 14 34 32 32" fill="none" stroke="#fff" stroke-width="13"/><path d="M58-4c0 24 14 34 32 32" fill="none" stroke="#c8ccd6" stroke-width="9"/></g><circle cx="33" cy="53" r="22" fill="#f2f4f6"/><circle cx="33" cy="53" r="18" fill="#3478f6"/><path d="M33 40l10 23c0 3-2 3-4 1l-6-5-6 5c-2 2-4 2-4-1z" fill="#fff"/></svg></button>
            <button class="app" aria-label="Photos"><svg viewBox="0 0 86 86"><rect width="86" height="86" rx="20" fill="#fdfdfd"/><g class="petals"><rect x="32" y="6" width="22" height="38" rx="11" fill="#f2a03c"/><rect x="32" y="6" width="22" height="38" rx="11" fill="#f4e23c" transform="rotate(45 43 43)"/><rect x="32" y="6" width="22" height="38" rx="11" fill="#b8d850" transform="rotate(90 43 43)"/><rect x="32" y="6" width="22" height="38" rx="11" fill="#82ca94" transform="rotate(135 43 43)"/><rect x="32" y="6" width="22" height="38" rx="11" fill="#74b4e4" transform="rotate(180 43 43)"/><rect x="32" y="6" width="22" height="38" rx="11" fill="#9c8ccc" transform="rotate(225 43 43)"/><rect x="32" y="6" width="22" height="38" rx="11" fill="#cc88b8" transform="rotate(270 43 43)"/><rect x="32" y="6" width="22" height="38" rx="11" fill="#f06a5c" transform="rotate(315 43 43)"/></g><circle cx="43" cy="43" r="2" fill="#fff"/></svg></button>
            <button class="app" aria-label="FaceTime"><svg viewBox="0 0 86 86"><rect width="86" height="86" rx="20" fill="url(#gGreen)"/><rect x="13" y="24" width="42" height="38" rx="10" fill="#eaf6e8"/><path d="M57 38l12-10c2-2 4-1 4 1v28c0 2-2 3-4 1L57 48z" fill="#d8efd4"/></svg></button>
            <button class="app" aria-label="Reminders"><svg viewBox="0 0 86 86"><rect width="86" height="86" rx="20" fill="#fbfbfa"/><path d="M32 22h45M32 43h45M32 65h45" stroke="#b0b0b0" stroke-width="2"/><g stroke-width="2"><circle cx="17" cy="22" r="7" fill="none" stroke="#3478f6"/><circle cx="17" cy="22" r="4" fill="#3478f6"/><circle cx="17" cy="43" r="7" fill="none" stroke="#e84a3c"/><circle cx="17" cy="43" r="4" fill="#e84a3c"/><circle cx="17" cy="65" r="7" fill="none" stroke="#ee9634"/><circle cx="17" cy="65" r="4" fill="#ee9634"/></g></svg></button>
            <button class="app" aria-label="Notes"><svg viewBox="0 0 86 86"><g clip-path="url(#tile)"><rect width="86" height="86" fill="#f0f0ee"/><rect width="86" height="22" fill="url(#gYellow)"/><path d="M0 23h86" stroke="#a8a494" stroke-width="2"/><path d="M2 27h84" stroke="#bbb" stroke-width="2" stroke-dasharray="2 2"/><path d="M0 43h86M0 65h86" stroke="#d0d0d0" stroke-width="2"/></g></svg></button>
            <button class="app" aria-label="TV"><svg viewBox="0 0 86 86"><rect width="86" height="86" rx="20" fill="url(#gDark)"/><svg x="10" y="26" width="28" height="31" viewBox="0 0 24 24" preserveAspectRatio="none" color="#fff"><use href="#apple"/></svg><text x="39" y="57" font-size="38" font-weight="500" fill="#fff">tv</text></svg></button>
            <button class="app" aria-label="Music"><svg viewBox="0 0 86 86"><rect width="86" height="86" rx="20" fill="url(#gRed)"/><path d="M30 20l32-7v45c0 4-4 8-9 8-4 0-7-3-7-6 0-4 3-7 8-8l4-1V27l-24 5v32c0 4-4 8-9 8-4 0-8-2-8-6s3-7 8-8l5-1z" fill="#fff"/></svg></button>
            <button class="app" aria-label="Podcasts"><svg viewBox="0 0 86 86"><rect width="86" height="86" rx="20" fill="url(#gPurple)"/><g fill="none" stroke="#fff" stroke-width="4" stroke-linecap="round"><path d="M31 66a29 29 0 1 1 24 0"/><path d="M31 55a19 19 0 1 1 24 0"/></g><circle cx="43" cy="38" r="7" fill="#fff"/><path d="M36 54c0-7 14-7 14 0l-3 18c-1 5-7 5-8 0z" fill="#fff"/></svg></button>
            <button class="app" aria-label="News"><svg viewBox="0 0 86 86"><rect width="86" height="86" rx="20" fill="#fff"/><path d="M18 18h14l36 50H54L18 32zM46 18h20a2 2 0 0 1 2 2v21zM18 46l22 22H20a2 2 0 0 1-2-2z" fill="url(#gRed)"/></svg></button>
            <button class="app" aria-label="Keynote"><svg viewBox="0 0 86 86"><rect width="86" height="86" rx="20" fill="url(#gBlue)"/><path d="M22 12h42l4 26H18z" fill="#f6f6f6"/><path d="M24 34h38" stroke="#8c9cb0" stroke-width="3"/><path d="M43 38v34" stroke="#d0d4da" stroke-width="4"/><path d="M29 73h28" stroke="#dfe2e6" stroke-width="4"/><circle cx="43" cy="22" r="8" fill="#70b4e8"/><path d="M43 22v-8a8 8 0 0 0-8 6z" fill="#c83c50"/><path d="M43 22l-8-2a8 8 0 0 0 3 9z" fill="#f0b43c"/><path d="M43 22l-5 7a8 8 0 0 0 12-4z" fill="#62b85c"/></svg></button>
            <button class="app" aria-label="Numbers"><svg viewBox="0 0 86 86"><rect width="86" height="86" rx="20" fill="url(#gGreen)"/><path d="M16 56h10v18H16zM31 41h10v33H31zM46 13h10v61H46zM61 29h10v45H61z" fill="#f0f4f0"/></svg></button>
            <button class="app" aria-label="Pages"><svg viewBox="0 0 86 86"><rect width="86" height="86" rx="20" fill="url(#gOrange)"/><path d="M18 73h55" stroke="#fcd8a8" stroke-width="3"/><path d="M70 16c3 2 1 6-1 10L22 69l-9 5 4-10z" fill="#f4f4f4"/><path d="M40 43l4 4" stroke="#888" stroke-width="2"/></svg></button>
            <button class="app" aria-label="App Store"><svg viewBox="0 0 86 86"><rect width="86" height="86" rx="20" fill="url(#gBlue)"/><path d="M48 19L30 52M38 19l29 46M16 53h33M61 53h9M23 63l-3 5" stroke="#fff" stroke-width="7" stroke-linecap="round"/></svg></button>
            <button class="app" aria-label="System Preferences"><svg viewBox="0 0 86 86"><rect width="86" height="86" rx="20" fill="url(#gGear)"/><circle cx="43" cy="43" r="37" fill="#2c2c2c"/><circle cx="43" cy="43" r="33" fill="none" stroke="#989898" stroke-width="4" stroke-dasharray="2 2"/><circle cx="43" cy="43" r="27" fill="#555" stroke="#b0b0b0" stroke-width="5"/><circle cx="43" cy="43" r="17" fill="#6c6c6c" stroke="#3a3a3a" stroke-width="5"/><path d="M43 43h27M43 43L29 20M43 43L29 66" stroke="#bcbcbc" stroke-width="5"/><circle cx="43" cy="43" r="4" fill="#3c3c3c"/></svg></button>
        </div>
        <i class="dock-line"></i>
        <button class="app running" aria-label="Microsoft Excel"><svg viewBox="0 0 86 86"><rect width="86" height="86" rx="20" fill="#fff"/><rect x="23" y="14" width="49" height="57" rx="3" fill="#2c5e38"/><path d="M23 29V17a3 3 0 0 1 3-3h21v15z" fill="#50a46c"/><path d="M47 14h22a3 3 0 0 1 3 3v12H47z" fill="#66c48a"/><path d="M23 29h24v14H23z" fill="#3c8450"/><path d="M47 29h25v14H47z" fill="#50a46c"/><path d="M47 43h25v14H47z" fill="#387c48"/><rect x="7" y="26" width="33" height="33" rx="3" fill="#2f7440"/><text x="16" y="51" font-size="23" font-weight="600" fill="#fff">X</text></svg></button>
        <i class="dock-line"></i>
        <button class="thumb" aria-label="Downloads window"><svg width="102" height="86" viewBox="0 0 102 86"><rect y="9" width="102" height="69" rx="2" fill="#fff"/><path d="M0 9h102v10H0z" fill="#f0eae8"/><path d="M0 9h15v69H0z" fill="#e6dedc"/><circle cx="4" cy="12" r="1" fill="#e84a3c"/><circle cx="7" cy="12" r="1" fill="#f0b840"/><path d="M17 12h24M56 12h28M16 17h20" stroke="#999" stroke-dasharray="4 3"/><path d="M4 18v56" stroke="#7ba4d8" stroke-width="3" stroke-dasharray="1 3"/><rect x="18" y="25" width="8" height="8" fill="#d8d8d8"/><rect x="16" y="33" width="12" height="3" fill="#3a74e0"/><path d="M17 76h46" stroke="#8ab8e4" stroke-dasharray="4 2"/><use href="#finder" x="67" y="59" width="33" height="33"/></svg></button>
        <button class="trash" aria-label="Trash"><svg width="77" height="97" viewBox="0 0 77 97"><path d="M1 9l10 80c2 9 53 9 55 0L76 9z" fill="#e6e6e8"/><path d="M12 82c8 6 45 6 54 0l-1 7c-2 9-51 9-53 0z" fill="#f8f8f8"/><ellipse cx="38" cy="9" rx="37" ry="8" fill="#d8b4b0" stroke="#eee" stroke-width="2"/></svg></button>
    </nav>
    <script src="script.js"></script>
</body>
</html>
```

FILE: styles.css
```css
* {
    box-sizing: border-box;
}
body {
    margin: 0;
    height: 100vh;
    overflow: hidden;
    display: flex;
    flex-direction: column;
    font-family: Inter, "Liberation Sans", sans-serif;
    font-size: 21px;
    color: #111;
    background:
        linear-gradient(90deg, #06142a 22%, #c07a2a 22%, #a8502a 45%, #7a1f1c 60%, #3a1428 75%, #0a1428) 0 0 / 100% 100px no-repeat,
        linear-gradient(90deg, #04101c 0%, #05111e 20%, #2c0420 21%, #43132f 33%, #45151d 34%, #4a1a18 43%, #3a0724 44%, #340620 60%, #43132f 70%, #340a28 74%, #4a1424 80%, #5c1c18 90%, #8a2f18 100%);
}
button {
    font: inherit;
    color: inherit;
    padding: 0;
    border: 0;
    background: none;
    display: flex;
    align-items: center;
    white-space: nowrap;
}
svg {
    display: block;
    flex: none;
    overflow: visible;
}
.defs {
    position: absolute;
}

/* menu bar */
.menubar {
    height: 48px;
    flex: none;
    display: flex;
    align-items: center;
    justify-content: space-between;
    padding: 0 36px 2px 40px;
    color: #f4eeec;
    font-size: 25px;
    font-weight: 500;
    text-shadow: 0 2px 4px rgba(0, 0, 0, .3);
    background: linear-gradient(90deg, #4f382f, #6b3d26 15%, #82401f 27%, #8d3d20 42%, #84321f 58%, #702c22 70%, #5a2824 82%, #38202a);
}
.menus {
    display: flex;
    align-items: center;
    gap: 42px;
}
.app-name {
    font-weight: 700;
}
.tray {
    display: flex;
    align-items: center;
    gap: 38px;
}
.battery {
    display: flex;
    align-items: center;
    gap: 8px;
    font-size: 22px;
}
.tray time {
    margin-left: -6px;
    font-size: 26px;
}

/* window */
.window {
    flex: 1;
    min-height: 0;
    margin-top: 2px;
    display: flex;
    flex-direction: column;
    border-radius: 20px;
    overflow: hidden;
    background: #fff;
}
.titlebar {
    height: 64px;
    flex: none;
    display: grid;
    grid-template-columns: 1fr auto 1fr;
    align-items: center;
    padding: 0 24px 2px 25px;
    color: #fff;
    background: #377c48;
    border-top: 2px solid #6fa37b;
}
.title-left, .lights, .quick, .title-right, .autosave {
    display: flex;
    align-items: center;
}
.lights {
    gap: 14px;
}
.light {
    width: 26px;
    height: 26px;
    border-radius: 50%;
    border: 1px solid rgba(0, 0, 0, .15);
}
.close { background: #ec6a5e; }
.minimize { background: #f5bf4f; }
.maximize { background: #61c454; }
.autosave {
    margin-left: 50px;
    gap: 12px;
    font-size: 22px;
    font-weight: 500;
    color: #d6e6da;
}
.switch {
    position: relative;
    display: flex;
}
.switch input {
    appearance: none;
    margin: 0;
    width: 78px;
    height: 28px;
    border-radius: 14px;
    background: #2e5138;
}
.switch input::before {
    content: "";
    display: block;
    width: 28px;
    height: 28px;
    border-radius: 50%;
    background: #fff;
}
.switch span {
    position: absolute;
    left: 31px;
    top: 5px;
    font-size: 15px;
    line-height: 18px;
    color: #fff;
}
.quick {
    margin-left: 28px;
    gap: 26px;
}
.dim {
    opacity: .4;
}
.small {
    margin: 0 -9px 0 -10px;
}
.doc-title {
    margin: 0;
    display: flex;
    align-items: center;
    gap: 10px;
    font-size: 26px;
    font-weight: 700;
}
.title-chev {
    margin-left: -4px;
}
.title-right {
    justify-content: flex-end;
    gap: 38px;
}

/* ribbon */
.ribbon {
    flex: none;
    background: linear-gradient(#f6f6f6, #ededed);
    border-bottom: 2px solid #c6c6c6;
}
.tabs {
    height: 68px;
    display: flex;
    align-items: flex-start;
    gap: 49px;
    padding: 8px 20px 0 22px;
    font-size: 26px;
    font-weight: 500;
    color: #262626;
}
.tab {
    height: 48px;
    border-bottom: 6px solid transparent;
}
.tab.active {
    font-weight: 700;
    border-image: linear-gradient(#356d45, #356d45) 1;
}
.tell {
    gap: 18px;
    margin-left: -12px;
}
.tab-actions {
    margin-left: auto;
    display: flex;
    gap: 20px;
}
.pill {
    height: 48px;
    padding: 0 12px 0 15px;
    gap: 9px;
    border: 2px solid #d4d4d4;
    border-radius: 8px;
    background: #fff;
    color: #356d45;
    font-size: 24px;
    font-weight: 600;
}
.groups {
    display: flex;
    padding-bottom: 16px;
    color: #000;
}
.group {
    height: 124px;
    flex: none;
    display: flex;
    gap: 16px;
    padding-top: 6px;
    border-right: 2px solid #cfcfcf;
}
.rows {
    flex-direction: column;
    padding-top: 10px;
}
.row {
    height: 48px;
    flex: none;
    display: flex;
    align-items: center;
    gap: 4px;
}
.chev {
    color: #3a3a3a;
}
.tool {
    width: 48px;
    height: 48px;
    justify-content: center;
    border-radius: 6px;
    font-size: 26px;
    color: #3a3a3a;
}
.tool.on {
    background: #c4c4c4;
}
.bold {
    font-weight: 700;
}
.italic {
    font-family: "Liberation Serif", serif;
    font-style: italic;
    font-size: 30px;
}
.underline {
    text-decoration: underline;
    text-underline-offset: 5px;
}
.symbol {
    font-size: 34px;
    font-weight: 300;
}
.drop {
    width: 16px;
    height: 48px;
    justify-content: center;
}
.divider {
    width: 2px;
    height: 36px;
    margin: 0 14px;
    background: #cfcfcf;
}
.pick {
    position: relative;
}
.pick select {
    appearance: none;
    width: 100%;
    height: 48px;
    padding: 0 10px;
    border: 2px solid #c2c2c2;
    border-radius: 8px;
    background: #fff;
    color: #000;
    font-family: inherit;
    font-size: 23px;
}
.pick .chev {
    position: absolute;
    right: 8px;
    top: 20px;
}
.pick-font { width: 282px; }
.pick-size { width: 108px; }
.pick-format { width: 310px; }
.wide {
    gap: 12px;
}
.big {
    flex-direction: column;
    align-items: center;
    text-align: center;
    line-height: 24px;
    align-self: flex-start;
}
.big-icon {
    height: 73px;
    display: flex;
    align-items: flex-start;
    gap: 12px;
}
.big .chev {
    margin-top: 27px;
}
.big:disabled, .big:disabled .chev {
    color: #949494;
}
.stack {
    display: flex;
    flex-direction: column;
    gap: 12px;
}
.mini {
    height: 32px;
    gap: 12px;
}
.group-clipboard { width: 210px; padding-left: 34px; }
.group-clipboard .big-icon { gap: 7px; }
.group-clipboard .big { width: 76px; align-items: flex-start; }
.group-clipboard .big > span:last-child { padding-left: 6px; }
.group-font { width: 540px; padding-left: 20px; }
.group-align { width: 324px; padding-left: 20px; }
.group-align .divider { margin: 0 12px; }
.group-wrap { width: 278px; padding-left: 24px; }
.group-number { width: 352px; padding-left: 19px; }
.group-styles { width: 364px; padding-left: 24px; gap: 15px; }
.group-cells { width: 194px; padding-left: 26px; }
.group-editing { width: 310px; padding-left: 26px; gap: 15px; }
.group-sensitivity { width: 156px; justify-content: center; }
.group-analyze { padding-left: 24px; border-right: 0; }

/* formula bar */
.formula-bar {
    height: 58px;
    flex: none;
    display: flex;
    align-items: center;
    background: #fff;
    border-bottom: 6px double #a8a8a8;
}
.formula-bar input {
    border: 0;
    outline: 0;
    padding: 0;
    font-family: inherit;
    font-size: 24px;
    background: none;
    color: #111;
}
.name-box {
    width: 171px;
    height: 52px;
    display: flex;
    align-items: center;
    justify-content: space-between;
    padding: 0 9px 0 20px;
    margin-right: 28px;
    border: solid #b4b4b4;
    border-width: 2px 2px 0 0;
}
.name-box input {
    width: 110px;
}
.formula-bar button {
    margin-right: 33px;
}
.formula-bar .fx {
    margin-right: 17px;
    font-family: "Liberation Serif", serif;
    font-style: italic;
    font-size: 34px;
    color: #444;
}
.formula-bar .formula {
    flex: 1;
    height: 32px;
    padding-left: 14px;
    border-left: 2px solid #dcdcdc;
}
.formula-bar .expand {
    margin-right: 8px;
}

/* sheet */
.sheet {
    flex: 1;
    min-height: 0;
    display: flex;
    overflow: hidden;
}
.row-heads {
    width: 46px;
    flex: none;
    border-right: 2px solid #b4b4b4;
    background: linear-gradient(90deg, #fff, #f6f6f6);
    font-family: "Liberation Sans", sans-serif;
    font-size: 20px;
    color: #5a5a5a;
}
.corner {
    height: 44px;
    padding: 8px 4px 0 10px;
    border-bottom: 2px solid #b4b4b4;
}
.row-heads ol {
    margin: 0;
    padding: 7px 0 0;
    list-style: none;
}
.row-heads li {
    height: 30px;
    line-height: 30px;
    text-align: center;
    border-bottom: 2px solid #e2e2e2;
}
.row-heads li.active {
    color: #356d45;
    background: #f0f0f0;
}
.grid {
    table-layout: fixed;
    width: 1px;
    border-collapse: separate;
    border-spacing: 0;
    font-family: Lato, sans-serif;
    font-size: 19px;
    font-weight: 500;
    color: #000;
}
.grid th {
    width: 106px;
    height: 44px;
    padding: 0;
    border-right: 2px solid #e4e4e4;
    border-bottom: 2px solid #b4b4b4;
    background: linear-gradient(#fff, #f6f6f6);
    font-family: "Liberation Sans", sans-serif;
    font-size: 20px;
    font-weight: 400;
    color: #5a5a5a;
}
.grid th.active {
    color: #356d45;
    background: #f0f0f0;
}
.grid th.col-a { width: 94px; }
.grid th.col-b { width: 88px; }
.grid th.col-c { width: 168px; }
.grid th.col-d { width: 160px; }
.grid td {
    height: 30px;
    padding: 2px 5px 0;
    line-height: 26px;
    text-align: right;
    white-space: nowrap;
    border-right: 2px solid #d4d4d4;
    border-bottom: 2px solid #d4d4d4;
}
.grid .title {
    font-size: 21px;
    font-weight: 700;
    text-align: center;
}
.grid .title-left-cell {
    text-align: left;
}
.grid .ruled {
    border-bottom-color: #000;
}
.grid .selected {
    position: relative;
}
.selected::before {
    content: "";
    position: absolute;
    inset: -4px -4px -4px -4px;
    border: 4px solid #356d45;
}
.selected::after {
    content: "";
    position: absolute;
    right: -6px;
    bottom: -6px;
    width: 12px;
    height: 12px;
    border: solid #fff;
    border-width: 2px 0 0 2px;
    background: #356d45;
}

/* sheet tabs */
.sheet-tabs {
    height: 54px;
    flex: none;
    display: flex;
    align-items: flex-start;
    border-top: 2px solid #cacaca;
    border-bottom: 2px solid #9c9c9c;
    background: linear-gradient(#f0f0f0, #eaeaea);
    padding-left: 30px;
}
.nav {
    height: 50px;
    margin-right: 31px;
}
.sheet-tab {
    width: 160px;
    height: 46px;
    margin-top: -2px;
    padding-top: 4px;
    justify-content: center;
    border: solid #bdbdbd;
    border-width: 0 2px 2px;
    border-radius: 0 0 6px 6px;
    background: #fff;
    color: #3f8250;
    font-size: 22px;
    font-weight: 700;
}
.add {
    width: 76px;
    height: 42px;
    padding: 4px 0 0 28px;
    border-right: 2px solid #cacaca;
}

/* status bar */
.status {
    height: 44px;
    flex: none;
    display: flex;
    align-items: center;
    padding: 0 48px;
    font-size: 24px;
    color: #4c4c4c;
    background: linear-gradient(#dedede, #c2c2c2);
}
.access {
    margin-left: 38px;
    gap: 5px;
}
.views {
    margin-left: auto;
    display: flex;
}
.view {
    width: 72px;
    height: 44px;
    justify-content: center;
}
.view.on {
    background: #989898;
}
.step {
    margin: 0 14px;
}
.views + .step {
    margin-left: 16px;
}
.zoom {
    appearance: none;
    width: 200px;
    height: 8px;
    margin: 0;
    border-radius: 4px;
    background: #8e8e8e;
}
.zoom::-webkit-slider-thumb {
    appearance: none;
    width: 32px;
    height: 32px;
    border-radius: 50%;
    background: #f4f4f4;
    box-shadow: 0 1px 3px rgba(0, 0, 0, .4);
}
.percent {
    margin-left: 20px;
}

/* dock */
.dock {
    flex: none;
    width: calc(100% - 196px);
    height: 138px;
    margin: 6px auto 10px;
    padding: 19px 25px 0 19px;
    display: flex;
    align-items: flex-start;
    border: 2px solid rgba(255, 255, 255, .22);
    border-radius: 40px;
    background: linear-gradient(90deg, #5b606e 0%, #5e6170 14%, #80576a 20%, #925b78 29%, #a45d5f 39%, #8d5767 46%, #8b596a 56%, #985b7e 69%, #8f5a76 74%, #a45d70 83%, #b66259 91%, #c36455 100%);
}
.apps {
    flex: 1;
    display: flex;
    justify-content: space-between;
}
.app {
    width: 86px;
    height: 114px;
    flex-direction: column;
    align-items: flex-start;
}
.app > svg {
    height: 86px;
}
.petals rect {
    mix-blend-mode: multiply;
}
.running::after {
    content: "";
    width: 8px;
    height: 8px;
    margin: 19px auto 0;
    border-radius: 50%;
    background: #000;
}
.dock-line {
    width: 2px;
    height: 102px;
    margin: -2px 41px 0;
    background: rgba(80, 10, 30, .6);
}
.thumb {
    margin-left: -9px;
}
.trash {
    margin: -4px 0 0 26px;
}
```

FILE: script.js
```js
const table = [
    ['Asia', 'Europe', 'North America', 'South America'],
    [61, 50, 66, 47],
    [58, 44, 45, 43],
    [52, 41, 39, 42],
    [49, 40, 39, 40],
    [47, 38, 35, 37],
    [46, 38, 34, 35],
    [46, 40, 32, 30],
    [45, 40, 30, 27],
    [44, 38, 30, 25],
    [44, 37, 29, 20]
];
const letters = 'ABCDEFGHIJKLMNOPQRSTUVWXYZ'.split('');
const rowCount = 38;

const cols = document.getElementById('cols');
const rows = document.getElementById('rows');
const cells = document.getElementById('cells');

letters.forEach((letter, i) => {
    const th = document.createElement('th');
    th.scope = 'col';
    th.textContent = letter;
    th.className = 'col-' + letter.toLowerCase();
    if (i === 0) th.classList.add('active');
    cols.appendChild(th);
});

for (let r = 0; r < rowCount; r++) {
    // row number, the last row is only partly in view and has none
    if (r < rowCount - 1) {
        const li = document.createElement('li');
        li.textContent = r + 1;
        if (r === 0) li.className = 'active';
        rows.appendChild(li);
    }

    // cells
    const tr = document.createElement('tr');
    letters.forEach((letter, c) => {
        const td = document.createElement('td');
        if (table[r] && table[r][c] !== undefined) {
            td.textContent = table[r][c];
            if (r === 0) td.classList.add('title');
            if (r === 0 && c === 3) td.classList.add('title-left-cell');
            if (r === 0 || r === table.length - 1) td.classList.add('ruled');
            if (r === 0 && c === 0) td.classList.add('selected');
        }
        tr.appendChild(td);
    });
    cells.appendChild(tr);
}
```
